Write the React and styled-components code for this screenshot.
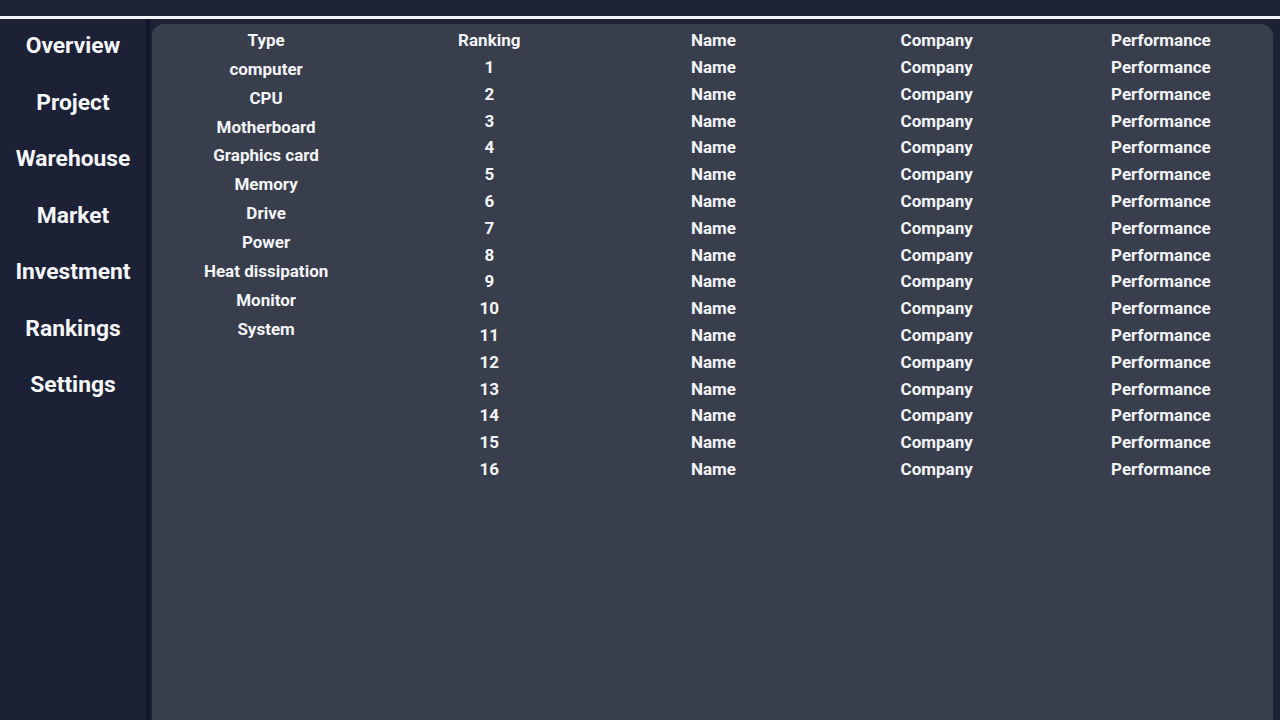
import styled, { createGlobalStyle } from 'styled-components'

const GlobalStyle = createGlobalStyle`
  html, body {
    margin: 0;
    padding: 0;
    background-color: #1c2135;
    font-family: Roboto, "Liberation Sans", sans-serif;
    overflow: hidden;
  }
`

const Page = styled.div`
  display: flex;
  flex-direction: column;
  width: 1280px;
  height: 720px;
  background-color: #1c2135;
  color: #f3f4f6;
`
const Header = styled.header`
  height: 16px;
  background-color: #1d2236;
  border-bottom: 3px solid #f4f5f7;
  flex-shrink: 0;
`
const Body = styled.div`
  display: flex;
  flex: 1;
  min-height: 0;
`
const Sidebar = styled.nav`
  display: flex;
  flex-direction: column;
  align-items: center;
  gap: 26.5px;
  width: 146px;
  padding-top: 12px;
  background-color: #1c2135;
  border-right: 4px solid #121725;
  flex-shrink: 0;
`
const NavItem = styled.div`
  font-size: 22.8px;
  font-weight: 700;
  line-height: 30px;
  color: #f5f6f8;
  white-space: nowrap;
`
const Panel = styled.main`
  flex: 1;
  display: grid;
  grid-template-columns: repeat(5, 1fr);
  align-items: start;
  margin: 5px 7px 0 2px;
  background-color: #383e4c;
  border-radius: 12px 12px 0 0;
`
const Column = styled.div`
  display: flex;
  flex-direction: column;
  align-items: center;
  padding-top: ${(p) => p.$pad}px;
  padding-left: ${(p) => p.$shift || 0}px;
`
const Cell = styled.div`
  font-size: 17px;
  font-weight: 700;
  line-height: ${(p) => p.$lh}px;
  color: #f3f4f6;
  white-space: nowrap;
`

const navItems = ['Overview', 'Project', 'Warehouse', 'Market', 'Investment', 'Rankings', 'Settings']
const types = [
  'Type',
  'computer',
  'CPU',
  'Motherboard',
  'Graphics card',
  'Memory',
  'Drive',
  'Power',
  'Heat dissipation',
  'Monitor',
  'System',
]
const ranks = Array.from({ length: 16 }, (_, i) => i + 1)

function RankColumn({ title, value, shift }) {
  return (
    <Column $pad={3.2} $shift={shift}>
      <Cell $lh={26.8}>{title}</Cell>
      {ranks.map((r) => (
        <Cell key={r} $lh={26.8}>
          {value ? value : r}
        </Cell>
      ))}
    </Column>
  )
}

export default function App() {
  return (
    <Page>
      <GlobalStyle />
      <Header />
      <Body>
        <Sidebar>
          {navItems.map((item) => (
            <NavItem key={item}>{item}</NavItem>
          ))}
        </Sidebar>
        <Panel>
          <Column $pad={1.8} $shift={4}>
            {types.map((t) => (
              <Cell key={t} $lh={28.9}>
                {t}
              </Cell>
            ))}
          </Column>
          <RankColumn title="Ranking" shift={2} />
          <RankColumn title="Name" value="Name" shift={2} />
          <RankColumn title="Company" value="Company" />
          <RankColumn title="Performance" value="Performance" />
        </Panel>
      </Body>
    </Page>
  )
}
